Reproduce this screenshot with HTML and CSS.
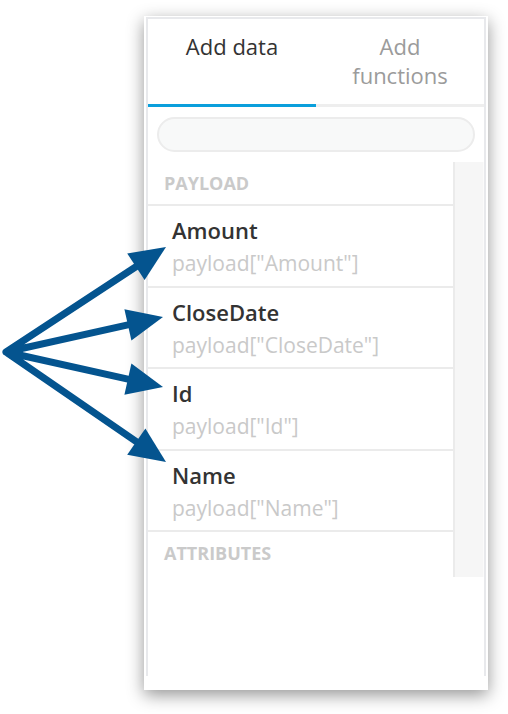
FILE: index.html
```html
<!DOCTYPE html>
<html>
<head>
<meta charset="utf-8">
<link rel="stylesheet" href="styles.css">
</head>
<body>
<div class="panel">
  <div class="frame">
    <div class="tabs">
      <div class="tab active">Add data</div>
      <div class="tab">Add<br>functions</div>
    </div>
    <div class="search"></div>
    <div class="listarea">
      <div class="list">
        <div class="group">PAYLOAD</div>
        <div class="item"><div class="name">Amount</div><div class="path">payload["Amount"]</div></div>
        <div class="item"><div class="name">CloseDate</div><div class="path">payload["CloseDate"]</div></div>
        <div class="item"><div class="name">Id</div><div class="path">payload["Id"]</div></div>
        <div class="item"><div class="name">Name</div><div class="path">payload["Name"]</div></div>
        <div class="group">ATTRIBUTES</div>
      </div>
      <div class="scrollbar"></div>
    </div>
  </div>
</div>
<svg class="arrows" width="508" height="714" viewBox="0 0 508 714">
  <path d="M135.9 266.75 L6 352 L127.9 324.8 M6 352 L127.9 379.2 M6 352 L136.3 441.6" fill="none" stroke="#04548f" stroke-width="7" stroke-linecap="round" stroke-linejoin="round"/>
  <polygon points="166,247 144.6,280.1 127.2,253.4" fill="#04548f"/>
  <polygon points="163,317 131.4,340.4 124.4,309.2" fill="#04548f"/>
  <polygon points="163,387 124.4,394.8 131.4,363.6" fill="#04548f"/>
  <polygon points="166,462 127.2,454.8 145.4,428.4" fill="#04548f"/>
</svg>
</body>
</html>
```
FILE: styles.css
```css
html, body {
  margin: 0;
  padding: 0;
  background: #ffffff;
}
body {
  position: relative;
  width: 508px;
  height: 714px;
  overflow: hidden;
  font-family: "Open Sans", "Noto Sans", sans-serif;
}
.panel {
  margin: 16px 0 0 144px;
  width: 344px;
  height: 674px;
  box-sizing: border-box;
  background: #ffffff;
  padding: 1px 2px 14px 2px;
  box-shadow: 0 5px 16px rgba(0, 0, 0, 0.42);
}
.frame {
  height: 100%;
  box-sizing: border-box;
  border: 2px solid #e8e9ec;
  border-bottom: none;
  display: flex;
  flex-direction: column;
}
.tabs {
  display: grid;
  grid-template-columns: 1fr 1fr;
}
.tab {
  height: 88px;
  box-sizing: border-box;
  padding-top: 13px;
  text-align: center;
  font-size: 22px;
  line-height: 29px;
  color: #9b9b9b;
  border-bottom: 3px solid #eeeeee;
}
.tab.active {
  color: #333333;
  border-bottom-color: #0a9fdc;
}
.search {
  margin: 10px 9px 0 9px;
  height: 35px;
  box-sizing: border-box;
  border: 2px solid #ececec;
  background: #f8f9f9;
  border-radius: 18px;
}
.listarea {
  margin-top: 10px;
  height: 415px;
  display: flex;
}
.list {
  flex: 1;
  border-right: 2px solid #ebebeb;
  overflow: hidden;
}
.scrollbar {
  width: 28px;
  background: #f6f6f6;
  border-right: 1px solid #fbfbfb;
}
.group {
  height: 44px;
  box-sizing: border-box;
  padding: 8px 0 0 16px;
  font-size: 18px;
  line-height: 26px;
  font-weight: 700;
  color: #cacaca;
  border-bottom: 2px solid #ebebeb;
}
.group:last-child {
  border-bottom: none;
}
.item {
  height: 81.5px;
  box-sizing: border-box;
  padding: 10px 0 0 24px;
  border-bottom: 2px solid #ebebeb;
}
.name {
  font-size: 22px;
  line-height: 28px;
  font-weight: 600;
  color: #333333;
}
.path {
  margin-top: 4px;
  font-size: 21px;
  line-height: 30px;
  color: #c9c9c9;
}
.arrows {
  position: absolute;
  top: 0;
  left: 0;
  pointer-events: none;
}
```
